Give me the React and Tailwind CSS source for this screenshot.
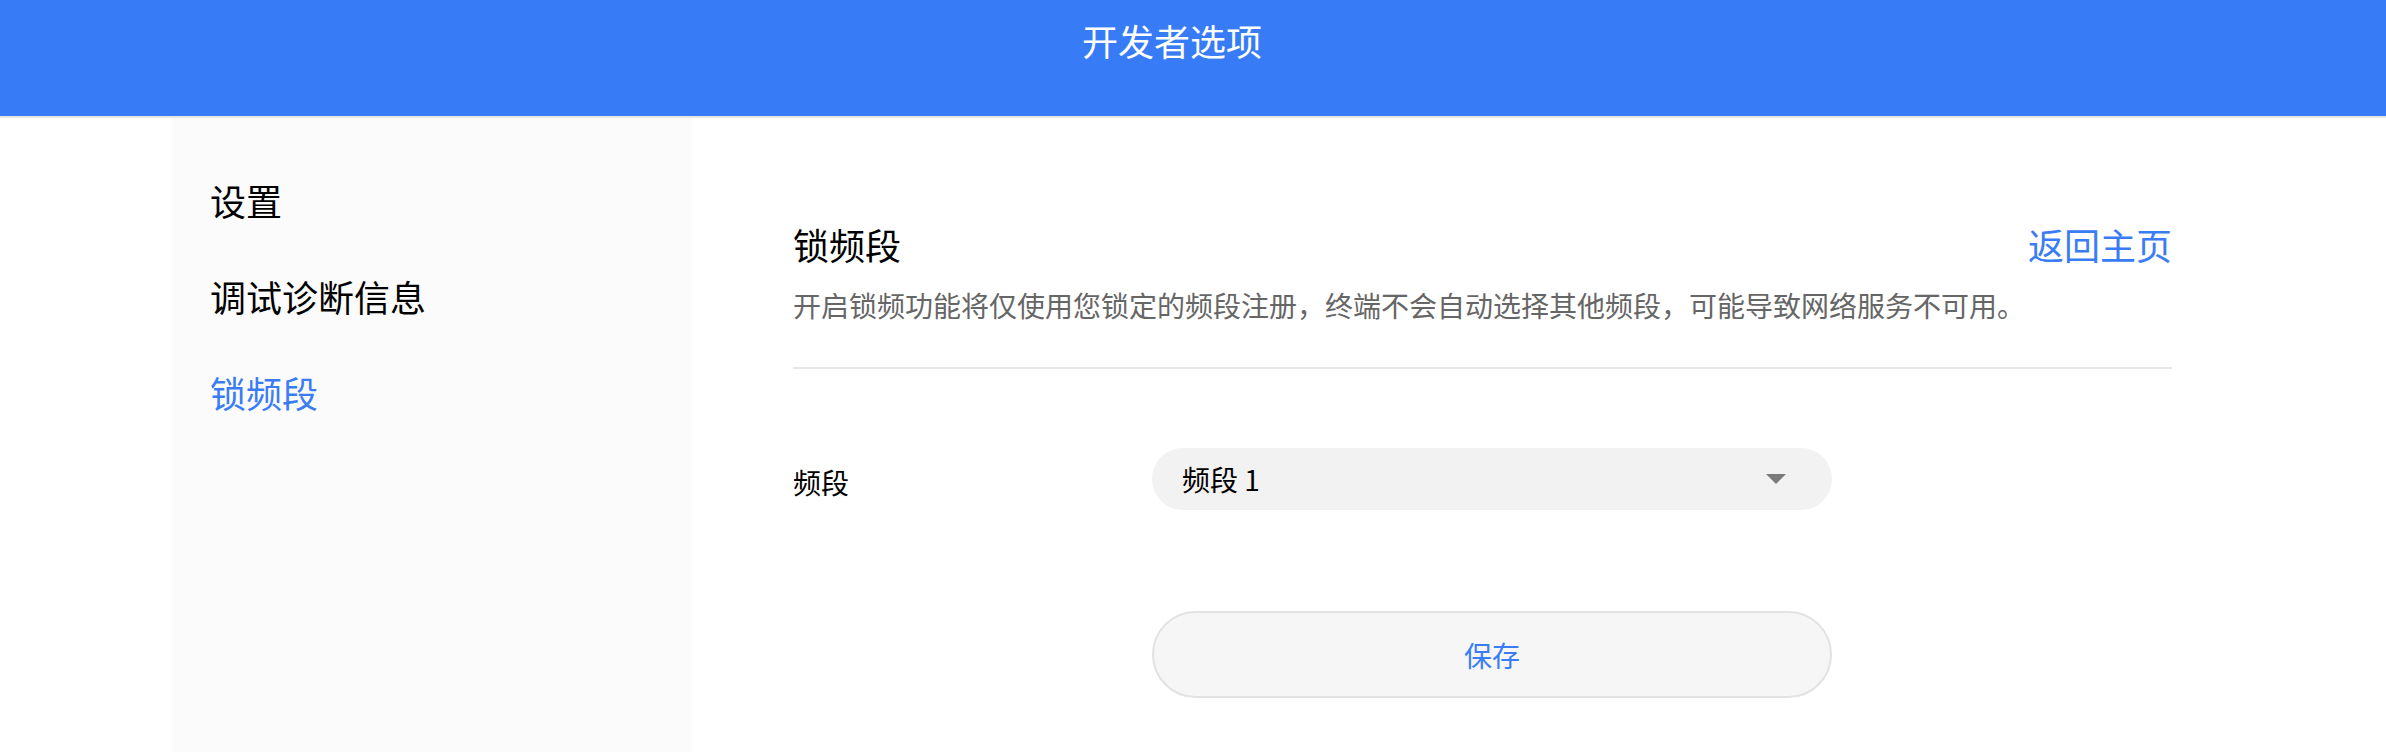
import React from 'react';

const FONT = { fontFamily: '"Noto Sans CJK SC", "Liberation Sans", sans-serif' };

const menuItems = [
  { key: 'settings', label: '设置' },
  { key: 'debug', label: '调试诊断信息' },
  { key: 'band', label: '锁频段', active: true },
];

const Sidebar = () => (
  <aside className="ml-[172px] w-[520px] h-[634px] bg-[#fbfbfb] pt-[58px] pl-[38px] flex flex-col gap-[48px]">
    {menuItems.map((item) => (
      <div
        key={item.key}
        className={`text-[36px] leading-[48px] cursor-pointer ${item.active ? 'text-[#3a7cf5]' : 'text-black'}`}
      >
        {item.label}
      </div>
    ))}
  </aside>
);

const BandSelect = () => (
  <div className="w-[680px] h-[62px] rounded-full bg-[#f2f2f2] pl-[30px] pr-[46px] flex items-center justify-between">
    <span className="text-[28px] leading-[40px] text-black">频段 1</span>
    <svg width="20" height="10" viewBox="0 0 20 10">
      <path d="M0 0 L20 0 L10 10 Z" fill="#7a7a7a" />
    </svg>
  </div>
);

const BandLock = () => (
  <main className="ml-[101px] w-[1379px] pt-[102px]">
    <div className="flex items-center justify-between">
      <h2 className="text-[36px] leading-[48px] text-black font-normal">锁频段</h2>
      <a className="text-[36px] leading-[48px] text-[#3a7cf5] cursor-pointer">返回主页</a>
    </div>
    <p className="mt-[17px] text-[28px] leading-[40px] text-[#666666]">
      开启锁频功能将仅使用您锁定的频段注册，终端不会自动选择其他频段，可能导致网络服务不可用。
    </p>
    <div className="mt-[42px] h-[2px] bg-[#e6e6e6]" />

    <div className="mt-[79px] flex items-center">
      <label className="w-[359px] text-[28px] leading-[40px] text-black pt-[6px]">频段</label>
      <BandSelect />
    </div>

    <div className="mt-[101px] pl-[359px]">
      <button className="w-[680px] h-[87px] rounded-full border-2 border-[#e2e2e2] bg-[#f6f6f6] text-[28px] leading-[40px] text-[#3a7cf5]">
        保存
      </button>
    </div>
  </main>
);

export default function App() {
  return (
    <div className="w-[2386px] h-[752px] overflow-hidden bg-white" style={FONT}>
      <header className="h-[116px] bg-[#377cf6] pt-[16px] pr-[42px] flex justify-center">
        <h1 className="text-[36px] leading-[48px] text-white font-normal">开发者选项</h1>
      </header>
      <div className="h-[2px] bg-[#e6e6e6]" />
      <div className="flex">
        <Sidebar />
        <BandLock />
      </div>
    </div>
  );
}
